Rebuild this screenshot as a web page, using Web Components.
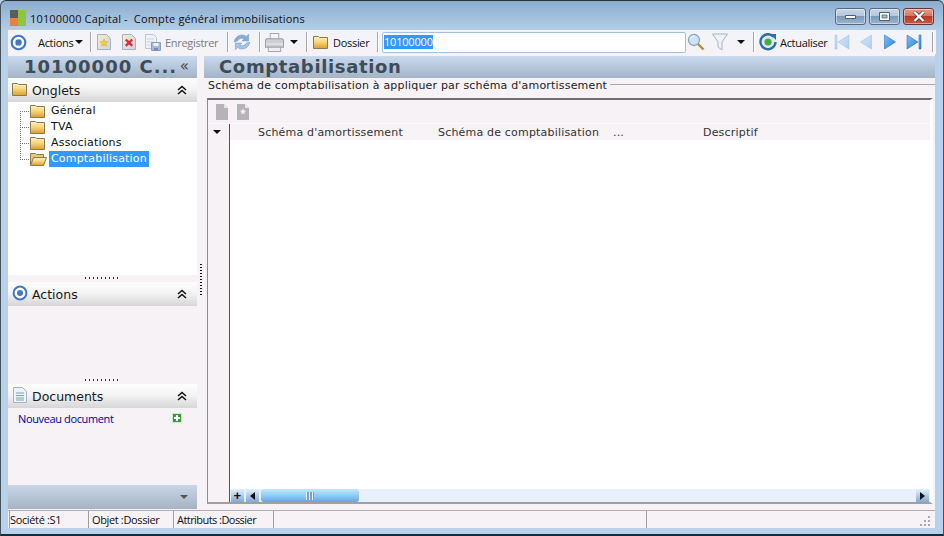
<!DOCTYPE html>
<html>
<head>
<meta charset="utf-8">
<style>
  html, body { margin: 0; height: 100%; overflow: hidden; background: #b9d1ea; }
</style>
</head>
<body>
<app-window>
  <title-bar slot="title">10100000 Capital -&nbsp; Compte général immobilisations</title-bar>
  <main-toolbar slot="toolbar"></main-toolbar>
  <side-bar slot="side"></side-bar>
  <record-page slot="main"></record-page>
  <status-bar slot="status"></status-bar>
</app-window>

<script>
// shared icon snippets
const folderGrad = `<defs><linearGradient id="fg" x1="0" y1="0" x2="0" y2="1"><stop offset="0" stop-color="#fff4c4"/><stop offset=".5" stop-color="#f6d272"/><stop offset="1" stop-color="#d99f2e"/></linearGradient></defs>`;
const paper = `<defs><linearGradient id="pg" x1="0" y1="0" x2="1" y2="1"><stop offset="0" stop-color="#f8eec8"/><stop offset="1" stop-color="#c9d2e8"/></linearGradient></defs>`;
const navGrad = (a, b) => `<defs><linearGradient id="ng${a.slice(1)}" x1="0" y1="0" x2="1" y2="1"><stop offset="0" stop-color="${a}"/><stop offset="1" stop-color="${b}"/></linearGradient></defs>`;

const icons = {
  target: (s) => `<svg width="${s}" height="${s}" viewBox="0 0 16 16"><circle cx="8" cy="8" r="6.4" fill="#fff" stroke="#3f78c4" stroke-width="2"/><circle cx="8" cy="8" r="3" fill="#3f78c4"/></svg>`,
  folder: `<svg width="16" height="14" viewBox="0 0 16 14">${folderGrad}<path d="M.5 3V1.500h5l1 1h8v11H.5z" fill="url(#fg)" stroke="#8a7a50"/></svg>`,
  folderOpen: `<svg width="17" height="14" viewBox="0 0 17 14">${folderGrad}<path d="M.5 13V1.500h5l1 1h7v3" fill="#e6c877" stroke="#8a7a50"/><path d="M.5 13.500l3-8h13l-3 8z" fill="url(#fg)" stroke="#8a7a50"/></svg>`,
  chevrons: `<svg width="10" height="10" viewBox="0 0 10 10"><path d="M1 5l4-3.500L9 5M1 9l4-3.500L9 9" fill="none" stroke="#111" stroke-width="1.500"/></svg>`,
  arrowDown: `<svg width="8" height="4" viewBox="0 0 8 4"><path d="M0 0h8L4 4z" fill="#111"/></svg>`,
  newDoc: `<svg width="14" height="16" viewBox="0 0 14 16">${paper}<path d="M.5.500h9l4 4v11H.5z" fill="url(#pg)" stroke="#a8b0c4"/><path d="M7 5l1.200 2.400 2.600.4-1.900 1.800.5 2.700L7 11.100 4.600 12.300l.5-2.700L3.200 7.800l2.600-.4z" fill="#f3cf3c" stroke="#d6a928" stroke-width=".5"/></svg>`,
  delDoc: `<svg width="14" height="16" viewBox="0 0 14 16">${paper}<path d="M.5.500h9l4 4v11H.5z" fill="url(#pg)" stroke="#a8b0c4"/><path d="M3.800 5.500l6.400 6.400m0-6.400l-6.400 6.400" stroke="#d3303a" stroke-width="2.400"/></svg>`,
  save: `<svg width="16" height="17" viewBox="0 0 16 17"><path d="M.5.500h8l3 3v11H.5z" fill="#eef1f7" stroke="#c0c6d2"/><path d="M2 5h7M2 8h7M2 11h4" stroke="#ccd3e2"/><path d="M6.500 8.500h9v8h-9z" fill="#a9b8d8" stroke="#8c9cc0"/><path d="M8.500 9h5v3h-5z" fill="#edf1f8"/><path d="M9 14h4v2.500H9z" fill="#7a8bb2"/></svg>`,
  sync: `<svg width="20" height="20" viewBox="0 0 18 18"><path d="M2 9A7 7 0 0 1 13 4l2-2v6H9l2-2A4.500 4.500 0 0 0 5 8z" fill="#86acd8" stroke="#7d9bbd" stroke-width=".5"/><path d="M16 9A7 7 0 0 1 5 14l-2 2v-6h6l-2 2a4.500 4.500 0 0 0 6-2z" fill="#a5c3e6" stroke="#7d9bbd" stroke-width=".5"/></svg>`,
  printer: `<svg width="19" height="19" viewBox="0 0 20 18" preserveAspectRatio="none"><path d="M5.500.5h9v6h-9z" fill="#f6f6f8" stroke="#a4a6ac"/><path d="M.5 7.500c0-1 1-2 2-2h15c1 0 2 1 2 2v6H.5z" fill="#cdcfd4" stroke="#9a9ca3"/><path d="M1 10.500h18" stroke="#eceded"/><path d="M3.500 13.500h13v4h-13z" fill="#eceef0" stroke="#a4a6ac"/></svg>`,
  magnifier: `<svg width="18" height="18" viewBox="0 0 18 18"><circle cx="7" cy="7" r="5.500" fill="#cfe3f7" stroke="#8aa3c0" stroke-width="1.300"/><path d="M3.500 6a3.500 3.500 0 0 1 4-3" fill="none" stroke="#fff"/><path d="M11 11l5.500 5.500" stroke="#b78a3c" stroke-width="2.400"/></svg>`,
  funnel: `<svg width="16" height="18" viewBox="0 0 16 18"><path d="M.5 1h15L10 9v8L6 14V9z" fill="#eef2f7" stroke="#a9b4c2"/></svg>`,
  refresh: `<svg width="18" height="18" viewBox="0 0 18 18"><path d="M14.500 3.600A7.500 7.500 0 1 0 16.500 9" fill="#dfeaf5" stroke="#2d6fa8" stroke-width="2.400"/><path d="M11 1h6v6z" fill="#2d6fa8"/><circle cx="9" cy="9" r="3.600" fill="#45ab44"/></svg>`,
  navFirst: (a, b, e) => `<svg width="16" height="16" viewBox="0 0 16 16">${navGrad(a, b)}<path d="M1 1h2v14H1z" fill="url(#ng${a.slice(1)})" stroke="${e}" stroke-width=".5"/><path d="M15 1v14L4 8z" fill="url(#ng${a.slice(1)})" stroke="${e}" stroke-width=".5"/></svg>`,
  navPrev: (a, b, e) => `<svg width="12" height="16" viewBox="0 0 12 16">${navGrad(a, b)}<path d="M11.500 1v14L.5 8z" fill="url(#ng${a.slice(1)})" stroke="${e}" stroke-width=".5"/></svg>`,
  navNext: (a, b, e) => `<svg width="12" height="16" viewBox="0 0 12 16">${navGrad(a, b)}<path d="M.5 1v14l11-7z" fill="url(#ng${a.slice(1)})" stroke="${e}" stroke-width=".5"/></svg>`,
  navLast: (a, b, e) => `<svg width="16" height="16" viewBox="0 0 16 16">${navGrad(a, b)}<path d="M1 1v14l11-7z" fill="url(#ng${a.slice(1)})" stroke="${e}" stroke-width=".5"/><path d="M13 1h2v14h-2z" fill="url(#ng${a.slice(1)})" stroke="${e}" stroke-width=".5"/></svg>`,
  greyDoc: `<svg width="12" height="16" viewBox="0 0 12 16"><path d="M0 0h8l4 4v12H0z" fill="#b4b4b8"/><path d="M8 0v4h4z" fill="#e8e8ea"/></svg>`,
  greyDocStar: `<svg width="12" height="16" viewBox="0 0 12 16"><path d="M0 0h8l4 4v12H0z" fill="#b4b4b8"/><path d="M8 0v4h4z" fill="#e8e8ea"/><path d="M6 4.500l1 2 2 .3-1.500 1.500.4 2L6 9.300l-1.900 1 .4-2L3 6.800l2-.3z" fill="#f2f2f2"/></svg>`,
  doc: `<svg width="14" height="16" viewBox="0 0 14 16"><path d="M.5.500h9l4 4v11H.5z" fill="#eef2fb" stroke="#a6b2cc"/><path d="M3 6h8M3 8.500h8M3 11h8M3 13h8" stroke="#7f9bd0"/></svg>`,
};

const windowTemplate = document.createElement('template');
windowTemplate.innerHTML = `
  <style>
    :host {
      display: grid;
      box-sizing: border-box;
      width: 944px;
      height: 536px;
      grid-template-columns: 1fr;
      grid-template-rows: 29px 24px 1fr 18px;
      padding: 0 7px 6px;
      background: linear-gradient(#8badd0 0, #b5cee8 30px, #b9d1ea 60px);
      border-style: solid;
      border-width: 1px 1px 2px 1px;
      border-color: #2a3238 #44525c #12303c #44525c;
      border-radius: 6px 6px 0 0;
      font: 11px "DejaVu Sans", sans-serif;
      color: #1a1a1a;
      overflow: hidden;
    }
    .title { margin: 0 -7px; }
    .row {
      display: grid;
      grid-template-columns: 189px 7px 1fr;
      background: #f6f2f6;
      min-height: 0;
      padding-top: 2px;
      margin-right: 1px;
    }
    .toolbar, .status { min-width: 0; }
    .grip { display: flex; justify-content: center; }
    .grip i {
      width: 2px;
      height: 33px;
      margin-top: 208px;
      background: repeating-linear-gradient(#111 0 1px, transparent 1px 3px);
    }
  </style>
  <div class="title"><slot name="title"></slot></div>
  <div class="toolbar"><slot name="toolbar"></slot></div>
  <div class="row">
    <slot name="side"></slot>
    <div class="grip"><i></i></div>
    <slot name="main"></slot>
  </div>
  <div class="status"><slot name="status"></slot></div>
`;

class AppWindow extends HTMLElement {
  constructor() {
    super();
    this.attachShadow({ mode: 'open' }).appendChild(windowTemplate.content.cloneNode(true));
  }
}

const titleTemplate = document.createElement('template');
titleTemplate.innerHTML = `
  <style>
    :host {
      display: flex;
      align-items: center;
      height: 29px;
      box-sizing: border-box;
      padding: 5px 1px 0 9px;
      font: 11px "Open Sans", "Noto Sans", sans-serif;
      color: #101010;
    }
    .logo { display: grid; grid-template-columns: 8px 8px; grid-template-rows: 8px 8px; width: 16px; height: 16px; margin-right: 4px; }
    .logo b { display: block; }
    .text { flex: 1; white-space: nowrap; letter-spacing: .16px; }
    .ctl {
      box-sizing: border-box;
      height: 17px;
      width: 31px;
      margin-left: 3px;
      border: 1px solid #56697e;
      border-radius: 3px;
      box-shadow: inset 0 0 0 1px rgba(255,255,255,.45);
      background: linear-gradient(#c5d6e8 0, #b3c8df 45%, #7e99b7 50%, #9cb6d1 100%);
      display: flex;
      align-items: center;
      justify-content: center;
    }
    .ctl.close {
      margin-right: 8px;
      border-color: #6b3232;
      background: linear-gradient(#e39c8e 0, #d77865 45%, #b73a27 50%, #c65a44 100%);
    }
    .controls { display: flex; margin-top: -3px; }
  </style>
  <span class="logo"><b style="background:#5c5c5c"></b><b style="background:#8fc63f"></b><b style="background:#ee7f3a"></b><b style="background:#8fc63f"></b></span>
  <span class="text"><slot></slot></span>
  <div class="controls">
    <div class="ctl"><svg width="11" height="6" viewBox="0 0 11 6"><path d="M.5 1.500h10v3H.5z" fill="#fff" stroke="#4e5f73"/></svg></div>
    <div class="ctl"><svg width="11" height="9" viewBox="0 0 11 9"><path d="M.5.500h10v8H.5z" fill="#fff" stroke="#4e5f73"/><path d="M3 3h5v3H3z" fill="#a9bed6" stroke="#4e5f73" stroke-width=".8"/></svg></div>
    <div class="ctl close"><svg width="14" height="11" viewBox="0 0 14 11"><path d="M2.500 1l9 9m0-9l-9 9" stroke="#4a2a28" stroke-width="3.600"/><path d="M2.500 1l9 9m0-9l-9 9" stroke="#fff" stroke-width="2.400"/></svg></div>
  </div>
`;

class TitleBar extends HTMLElement {
  constructor() {
    super();
    this.attachShadow({ mode: 'open' }).appendChild(titleTemplate.content.cloneNode(true));
  }
}

class MainToolbar extends HTMLElement {
  constructor() {
    super();
    const pale = ['#d4e5f7', '#b0cef0', '#98bce6'];
    const bright = ['#7cc0f8', '#2a84dc', '#1c5fa8'];
    // [kind, width, content, padding-right, padding-left]
    const items = [
      ['i', 20, icons.target(17)],
      ['t', 62, 'Actions<svg style="margin-left:2px" width="8" height="4" viewBox="0 0 8 4"><path d="M0 0h8L4 4z" fill="#111"/></svg>', 0, 10],
      ['s'],
      ['i', 24, icons.newDoc],
      ['i', 26, icons.delDoc],
      ['i', 22, icons.save],
      ['d', 63, 'Enregistrer', 0, 1],
      ['s'],
      ['i', 30, icons.sync, 4],
      ['s'],
      ['i', 26, icons.printer],
      ['i', 19, icons.arrowDown, 5],
      ['s'],
      ['i', 25, icons.folder],
      ['t', 44, 'Dossier'],
      ['s'],
    ];
    const after = [
      ['i', 20, icons.magnifier],
      ['i', 28, icons.funnel],
      ['i', 19, icons.arrowDown, 5],
      ['s'],
      ['i', 25, icons.refresh],
      ['t', 50, 'Actualiser'],
      ['i', 24, icons.navFirst(...pale)],
      ['i', 24, icons.navPrev(...pale)],
      ['i', 24, icons.navNext(...bright)],
      ['i', 24, icons.navLast(...bright)],
      ['g', 6, ''],
      ['s'],
    ];
    const render = (list) => list.map(([kind, w, html, pr = 0, pl = 0]) => {
      if (kind === 's') return '<span class="sep"></span>';
      return `<span class="item ${kind}" style="width:${w}px;padding-right:${pr}px;padding-left:${pl}px">${html}</span>`;
    }).join('');
    this.attachShadow({ mode: 'open' }).innerHTML = `
      <style>
        :host {
          display: flex;
          align-items: center;
          box-sizing: border-box;
          height: 24px;
          background: linear-gradient(#f1f4f9, #f6f2f6);
          font: 11px "Open Sans", "Noto Sans", sans-serif;
          letter-spacing: -.3px;
          color: #111;
          overflow: hidden;
        }
        .item { box-sizing: border-box; display: flex; align-items: center; justify-content: center; flex: none; height: 22px; white-space: nowrap; }
        .d { color: #7c7c7c; justify-content: flex-start; }
        .t { justify-content: flex-start; }
        .sep { flex: none; width: 1px; height: 20px; background: #a6a6a6; border-right: 1px solid #fff; }
        .field {
          flex: none;
          box-sizing: border-box;
          width: 304px;
          height: 21px;
          margin-left: 3px;
          padding: 1px 0 0 1px;
          border: 1px solid #a8bfd8;
          border-radius: 2px;
          background: #fff;
        }
        .field b {
          display: inline-block;
          line-height: 14px;
          height: 14px;
          font-weight: 400;
          letter-spacing: -.2px;
          background: #3399ff;
          color: #fff;
        }
      </style>
      ${render(items)}
      <div class="field"><b>10100000</b></div>
      ${render(after)}
    `;
  }
}

class FoldHead extends HTMLElement {
  constructor() {
    super();
    this.attachShadow({ mode: 'open' }).innerHTML = `
      <style>
        :host {
          display: flex;
          align-items: center;
          box-sizing: border-box;
          height: 24px;
          padding: 0 10px 0 4px;
          background: linear-gradient(#fdfdfd 0, #f4f4f4 45%, #d6d6d8 100%);
          font: 12.500px "DejaVu Sans", sans-serif;
          color: #1a1a1a;
          flex: none;
        }
        .ic { width: 16px; display: flex; justify-content: center; margin-right: 4px; }
        .lbl { flex: 1; }
      </style>
      <span class="ic"><slot name="icon"></slot></span>
      <span class="lbl"><slot></slot></span>
      ${icons.chevrons}
    `;
  }
}

class TreeView extends HTMLElement {
  connectedCallback() {
    const rows = ['Général', 'TVA', 'Associations', 'Comptabilisation'];
    const html = rows.map((r, i) => {
      const last = i === rows.length - 1;
      return `<div class="row">
        <span class="line ${i === 0 ? 'first' : ''} ${last ? 'last' : ''}"></span>
        <span class="folder">${last ? icons.folderOpen : icons.folder}</span>
        <span class="label ${last ? 'sel' : ''}">${r}</span>
      </div>`;
    }).join('');
    this.attachShadow({ mode: 'open' }).innerHTML = `
      <style>
        :host { display: block; box-sizing: border-box; padding-top: 1px; background: #fff; font: 11px "DejaVu Sans", sans-serif; letter-spacing: .19px; color: #111; }
        .row { display: flex; align-items: center; height: 16px; padding-left: 12px; }
        .line {
          flex: none;
          width: 10px;
          height: 16px;
          --h: repeating-linear-gradient(90deg, #777 0 1px, transparent 1px 2px);
          --v: repeating-linear-gradient(#777 0 1px, transparent 1px 2px);
          background: var(--h) left 8px / 100% 1px no-repeat, var(--v) left top / 1px 100% no-repeat;
        }
        .line.first { background: var(--h) left 8px / 100% 1px no-repeat, var(--v) left 8px / 1px 100% no-repeat; }
        .line.last { background: var(--h) left 8px / 100% 1px no-repeat, var(--v) left top / 1px 9px no-repeat; }
        .folder { width: 17px; display: flex; justify-content: flex-start; flex: none; }
        .label { margin-left: 2px; padding: 0 2px; line-height: 16px; white-space: nowrap; }
        .sel { background: #3399ff; color: #fff; }
      </style>
      ${html}
    `;
  }
}

class SideBar extends HTMLElement {
  constructor() {
    super();
    this.attachShadow({ mode: 'open' }).innerHTML = `
      <style>
        :host {
          display: flex;
          flex-direction: column;
          height: 100%;
          min-height: 0;
          background: #f6f2f6;
          font: 11px "DejaVu Sans", sans-serif;
        }
        .head {
          flex: none;
          display: flex;
          align-items: center;
          height: 22px;
          box-sizing: border-box;
          padding: 0 8px 2px 16px;
          background: linear-gradient(#c9daef, #a4b4c6);
          font: bold 18px "DejaVu Sans", sans-serif;
          letter-spacing: 1px;
          color: #3e4c58;
        }
        .head span { flex: 1; white-space: nowrap; }
        .head em { font: 15px "DejaVu Sans", sans-serif; color: #445; letter-spacing: 0; }
        tree-view { height: 173px; flex: none; }
        .dots {
          flex: none;
          height: 7px;
          box-sizing: border-box;
          padding-top: 2px;
          display: flex;
          justify-content: center;
          align-items: flex-start;
        }
        .dots i { width: 35px; height: 2px; margin-left: -1px; background: repeating-linear-gradient(90deg, #333 0 1px, transparent 1px 4px); }
        .actions-body { flex: none; height: 71px; }
        .doc-row {
          flex: none;
          display: flex;
          align-items: center;
          justify-content: space-between;
          box-sizing: border-box;
          height: 22px;
          padding: 0 15px 2px 10px;
          font: 11px "Open Sans", "Noto Sans", sans-serif;
          letter-spacing: -.37px;
          color: #00009c;
        }
        .plus { width: 10px; height: 10px; background: #3b9a3b; border: 1px solid #cfe6cf; box-sizing: border-box; position: relative; }
        .plus::before { content: ""; position: absolute; left: 1px; top: 3px; width: 6px; height: 2px; background: #fff; }
        .plus::after { content: ""; position: absolute; left: 3px; top: 1px; width: 2px; height: 6px; background: #fff; }
        .spacer { flex: 1; }
        .foot {
          flex: none;
          height: 24px;
          margin-bottom: 1px;
          display: flex;
          align-items: center;
          justify-content: flex-end;
          padding-right: 9px;
          background: linear-gradient(#c8d6e8, #a6b3c2);
        }
        .foot i { border: 4px solid transparent; border-top: 4px solid #555; border-bottom: 0; }
      </style>
      <div class="head"><span>10100000 C...</span><em>«</em></div>
      <fold-head><span slot="icon">${icons.folder}</span>Onglets</fold-head>
      <tree-view></tree-view>
      <div class="dots"><i></i></div>
      <fold-head><span slot="icon">${icons.target(16)}</span>Actions</fold-head>
      <div class="actions-body"></div>
      <div class="dots"><i></i></div>
      <fold-head><span slot="icon">${icons.doc}</span>Documents</fold-head>
      <div class="doc-row"><span>Nouveau document</span><span class="plus"></span></div>
      <div class="spacer"></div>
      <div class="foot"><i></i></div>
    `;
  }
}

class DataGrid extends HTMLElement {
  constructor() {
    super();
    this.attachShadow({ mode: 'open' }).innerHTML = `
      <style>
        :host {
          display: grid;
          grid-template-columns: 22px 1fr;
          grid-template-rows: 24px 16px 1fr 13px;
          flex: 1;
          min-height: 0;
          box-sizing: border-box;
          border-style: solid;
          border-width: 2px 3px 2px 1px;
          border-color: #6f6f6f #fff #a0a0a0 #8c8c8c;
          background: #f6f2f6;
          font: 11px "DejaVu Sans", sans-serif;
          letter-spacing: .19px;
          color: #333;
        }
        .bar { grid-column: 1 / 3; display: flex; align-items: center; gap: 9px; padding-left: 8px; border-bottom: 1px solid #fbf9fb; box-sizing: border-box; }
        .corner { display: flex; justify-content: center; align-items: center; border-right: 1px solid #555; padding-right: 3px; }
        .cols { display: flex; align-items: center; white-space: nowrap; background: #f7f3f7; }
        .cols span { flex: none; box-sizing: border-box; }
        .side { border-right: 1px solid #555; grid-row: 3 / 5; }
        .body { background: #fff; }
        .scroll {
          display: flex;
          align-items: stretch;
          background: #e8f0fb;
        }
        .btn {
          width: 13px;
          flex: none;
          display: flex; align-items: center; justify-content: center;
          font: bold 13px "Liberation Sans", sans-serif;
          color: #111;
          background: linear-gradient(#dff3ff, #86a8d6);
        }
        .plus-btn { margin-left: 1px; }
        .back { margin-left: 2px; }
        .thumb {
          flex: none;
          width: 98px;
          margin-left: 2px;
          border-radius: 3px;
          background: linear-gradient(#c0e8ff 0, #8fcdf5 50%, #6ea0d8 100%);
          display: flex; align-items: center; justify-content: center;
        }
        .thumb i { width: 8px; height: 8px; background: repeating-linear-gradient(90deg, #eef 0 1px, #7a9cc6 1px 3px); }
        .fill { flex: 1; }
      </style>
      <div class="bar">${icons.greyDoc}${icons.greyDocStar}</div>
      <div class="corner"><svg width="8" height="4" viewBox="0 0 8 4"><path d="M0 0h8L4 4z" fill="#111"/></svg></div>
      <div class="cols">
        <span style="width:208px;padding-left:28px">Schéma d'amortissement</span>
        <span style="width:175px">Schéma de comptabilisation</span>
        <span style="width:90px">...</span>
        <span>Descriptif</span>
      </div>
      <div class="side"></div>
      <div class="body"></div>
      <div class="scroll">
        <span class="btn plus-btn">+</span>
        <span class="btn back"><svg width="5" height="8" viewBox="0 0 5 8"><path d="M5 0v8L0 4z" fill="#111"/></svg></span>
        <span class="thumb"><i></i></span>
        <span class="fill"></span>
        <span class="btn"><svg width="5" height="8" viewBox="0 0 5 8"><path d="M0 0v8l5-4z" fill="#111"/></svg></span>
        <span style="width:1px;flex:none"></span>
      </div>
    `;
  }
}

class RecordPage extends HTMLElement {
  constructor() {
    super();
    this.attachShadow({ mode: 'open' }).innerHTML = `
      <style>
        :host {
          display: flex;
          flex-direction: column;
          height: 100%;
          min-height: 0;
          background: #f6f2f6;
          font: 11px "DejaVu Sans", sans-serif;
        }
        .head {
          flex: none;
          box-sizing: border-box;
          height: 22px;
          padding: 0 0 2px 15px;
          display: flex;
          align-items: center;
          background: linear-gradient(#c9daef, #a4b4c6);
          font: bold 18px "DejaVu Sans", sans-serif;
          letter-spacing: .65px;
          color: #3e4c58;
        }
        .legend {
          flex: none;
          display: flex;
          align-items: center;
          height: 14px;
          padding-left: 4px;
          letter-spacing: .19px;
          color: #222;
          white-space: nowrap;
        }
        .legend::after { content: ""; flex: 1; height: 1px; background: #a8a8a8; margin-left: 3px; margin-top: -1px; }
        .box { flex: 1; min-height: 0; display: flex; flex-direction: column; padding: 6px 2px 6px 3px; }
      </style>
      <div class="head">Comptabilisation</div>
      <div class="legend">Schéma de comptabilisation à appliquer par schéma d'amortissement</div>
      <div class="box"><data-grid></data-grid></div>
    `;
  }
}

class StatusBar extends HTMLElement {
  constructor() {
    super();
    this.attachShadow({ mode: 'open' }).innerHTML = `
      <style>
        :host {
          display: flex;
          height: 18px;
          box-sizing: border-box;
          margin-right: 1px;
          background: #f6f2f6;
          border-top: 1px solid #b0acb0;
          font: 11px "Open Sans", "Noto Sans", sans-serif;
          letter-spacing: -.36px;
          color: #111;
          padding-left: 1px;
        }
        span { box-sizing: border-box; flex: none; padding-left: 3px; line-height: 17px; border-right: 1px solid #a0a0a0; white-space: nowrap; }
        .grip { flex: 1; border: 0; display: flex; justify-content: flex-end; align-items: flex-end; padding: 0 5px 2px 0; }
      </style>
      <span style="width:80px;border-left:1px solid #a0a0a0;padding-left:0">Société :S1</span>
      <span style="width:85px">Objet :Dossier</span>
      <span style="width:100px;letter-spacing:-.55px">Attributs :Dossier</span>
      <span style="width:373px"></span>
      <span class="grip"><svg width="10" height="10" viewBox="0 0 10 10"><path d="M8 0h2v2H8zM4 4h2v2H4zM8 4h2v2H8zM0 8h2v2H0zM4 8h2v2H4zM8 8h2v2H8z" fill="#a9a9a9"/></svg></span>
    `;
  }
}

customElements.define('app-window', AppWindow);
customElements.define('title-bar', TitleBar);
customElements.define('main-toolbar', MainToolbar);
customElements.define('fold-head', FoldHead);
customElements.define('tree-view', TreeView);
customElements.define('side-bar', SideBar);
customElements.define('data-grid', DataGrid);
customElements.define('record-page', RecordPage);
customElements.define('status-bar', StatusBar);
</script>
</body>
</html>
